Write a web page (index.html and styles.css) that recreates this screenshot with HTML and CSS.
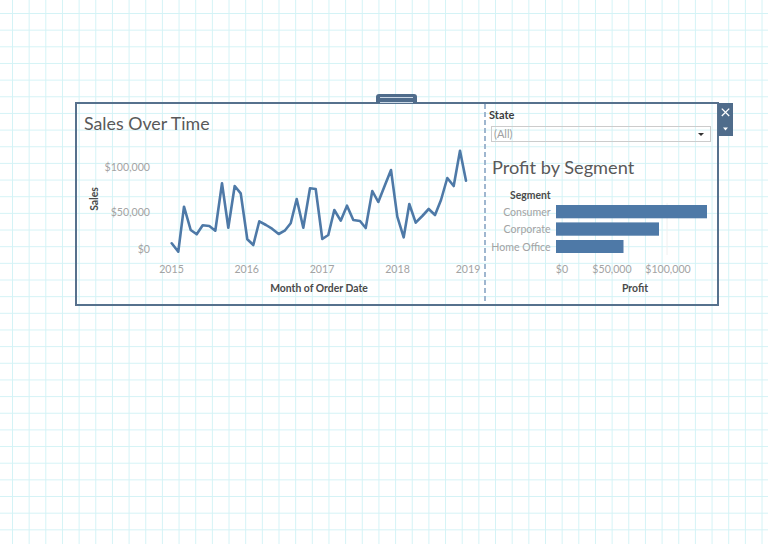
FILE: index.html
```html
<!DOCTYPE html>
<html lang="en">
<head>
    <meta charset="UTF-8">
    <meta name="viewport" content="width=device-width, initial-scale=1.0">
    <title>Sales Dashboard</title>
    <link rel="stylesheet" href="styles.css">
</head>
<body>

    <div class="dashboard">
        <div class="drag-handle"></div>
        <div class="zone-tab">
            <svg width="15" height="33" viewBox="0 0 15 33">
                <path d="M3.8 5.6 L11.2 13 M11.2 5.6 L3.8 13" stroke="#fff" stroke-width="1.3" fill="none"/>
                <path d="M5 24.6 L10 24.6 L7.5 27.4 Z" fill="#fff"/>
            </svg>
        </div>

        <div class="sheet sheet-sales">
            <h1 class="sheet-title">Sales Over Time</h1>
            <svg class="chart" width="407" height="171" viewBox="77 133 407 171">
                <text class="axis-title" x="97.5" y="199" text-anchor="middle" transform="rotate(-90 97.5 199)">Sales</text>
                <text class="axis-label" x="150" y="171" text-anchor="end">$100,000</text>
                <text class="axis-label" x="150" y="215.7" text-anchor="end">$50,000</text>
                <text class="axis-label" x="150" y="252.7" text-anchor="end">$0</text>

                <polyline class="sales-line" points="171.7,243.3 178.3,251.7 184,206.7 190.7,230 196.7,234.3 202.7,225.3 209.3,226 215.3,230.7 222,183.3 228.3,227.7 234.7,186 240.7,193.3 247.3,239.3 253.3,245 259.3,221.3 266,225 272,228.7 278.7,234 284.7,230.7 290.7,223.3 296.7,199 303.3,227.7 310,188.3 315.7,189 322.3,239 328.3,235 334.3,210 340.7,220.7 347,205.7 353.3,220 360,221 365.7,228 372.3,191 378.3,202 385,185 391,170 397.3,216.7 403.7,237.3 409.3,204 415.7,222.7 422.3,216 428.7,209 435,215 441,200 447.3,178 453.7,186 460,150.7 466,180.7"/>

                <text class="axis-label" x="171.5" y="273" text-anchor="middle">2015</text>
                <text class="axis-label" x="246.7" y="273" text-anchor="middle">2016</text>
                <text class="axis-label" x="322" y="273" text-anchor="middle">2017</text>
                <text class="axis-label" x="397.5" y="273" text-anchor="middle">2018</text>
                <text class="axis-label" x="468" y="273" text-anchor="middle">2019</text>
                <text class="axis-title" x="319" y="292" text-anchor="middle">Month of Order Date</text>
            </svg>
        </div>

        <div class="divider"></div>

        <div class="sheet sheet-profit">
            <div class="filter-label">State</div>
            <div class="filter-select">
                <span>(All)</span>
                <span class="caret"></span>
            </div>
            <h2 class="sheet-title">Profit by Segment</h2>
            <svg class="chart" width="231" height="127" viewBox="486 177 231 127">
                <text class="axis-title" x="550.7" y="198.7" text-anchor="end">Segment</text>
                <line class="grid-line" x1="667" y1="203" x2="667" y2="255"/>

                <text class="axis-label" x="550.7" y="215.6" text-anchor="end">Consumer</text>
                <rect class="bar" x="556" y="205" width="151" height="13.3"/>
                <text class="axis-label" x="550.7" y="233" text-anchor="end">Corporate</text>
                <rect class="bar" x="556" y="222.4" width="103" height="13.3"/>
                <text class="axis-label" x="550.7" y="250.5" text-anchor="end">Home Office</text>
                <rect class="bar" x="556" y="240" width="67.5" height="13"/>

                <text class="axis-label" x="562" y="272.5" text-anchor="middle">$0</text>
                <text class="axis-label" x="612" y="272.5" text-anchor="middle">$50,000</text>
                <text class="axis-label" x="668" y="272.5" text-anchor="middle">$100,000</text>
                <text class="axis-title" x="635" y="291.7" text-anchor="middle">Profit</text>
            </svg>
        </div>
    </div>

</body>
</html>
```

FILE: styles.css
```css
* {
    margin: 0;
    padding: 0;
    box-sizing: border-box;
}

body {
    font-family: Lato, 'Open Sans', sans-serif;
    background-color: #ffffff;
    background-image:
        linear-gradient(to right, #d4f3f6 1px, transparent 1px),
        linear-gradient(to bottom, #d4f3f6 1px, transparent 1px);
    background-size: 16.667px 16.667px;
    background-position: 12px 13px;
    width: 768px;
    height: 544px;
    overflow: hidden;
}

.dashboard {
    position: relative;
    display: flex;
    width: 644px;
    height: 204px;
    margin: 102px 0 0 75px;
    border: 2px solid #56718d;
}

.drag-handle {
    position: absolute;
    top: -10px;
    left: 299px;
    width: 41px;
    height: 9px;
    background-color: #4f6c8b;
    border-radius: 3px 3px 0 0;
}

.drag-handle::before {
    content: '';
    position: absolute;
    top: 3px;
    left: 4px;
    right: 4px;
    height: 4px;
    border-top: 1px solid #cbd8e6;
    border-bottom: 1px solid #cbd8e6;
}

.zone-tab {
    position: absolute;
    top: -1px;
    left: 641px;
    width: 15px;
    height: 33px;
    background-color: #4f6c8b;
}

.zone-tab svg {
    display: block;
}

.sheet {
    display: flex;
    flex-direction: column;
}

.sheet-sales {
    width: 407px;
}

.sheet-profit {
    flex: 1;
    padding-top: 4px;
}

.sheet-title {
    font-size: 17.8px;
    font-weight: normal;
    line-height: 20px;
    color: #595959;
}

.sheet-sales .sheet-title {
    padding: 9px 0 0 7px;
}

.sheet-profit .sheet-title {
    font-size: 18.2px;
    margin-top: 15px;
    padding-left: 6px;
}

.divider {
    width: 2px;
    background-image: repeating-linear-gradient(to bottom, #9fb6cf 0, #9fb6cf 5px, transparent 5px, transparent 8px);
}

.filter-label {
    font-size: 11px;
    font-weight: bold;
    line-height: 14px;
    color: #3d3d3d;
    padding-left: 3px;
}

.filter-select {
    display: flex;
    justify-content: space-between;
    align-items: center;
    width: 220px;
    height: 16px;
    margin: 4px 0 0 5px;
    padding: 0 6px 0 2px;
    border: 1px solid #cccccc;
    font-size: 11px;
    line-height: 14px;
    color: #a0a0a0;
}

.caret {
    width: 0;
    height: 0;
    border-left: 3px solid transparent;
    border-right: 3px solid transparent;
    border-top: 3.5px solid #333333;
}

.chart {
    display: block;
}

.axis-label {
    font-family: Lato, 'Open Sans', sans-serif;
    font-size: 10.6px;
    fill: #a3a3a3;
}

.axis-title {
    font-family: Lato, 'Open Sans', sans-serif;
    font-size: 10.4px;
    font-weight: bold;
    fill: #4a4a4a;
}

.sales-line {
    fill: none;
    stroke: #4e79a7;
    stroke-width: 2.6;
    stroke-linejoin: round;
    stroke-linecap: round;
}

.bar {
    fill: #4e79a7;
}

.grid-line {
    stroke: #f0f0f0;
    stroke-width: 1;
}
```
